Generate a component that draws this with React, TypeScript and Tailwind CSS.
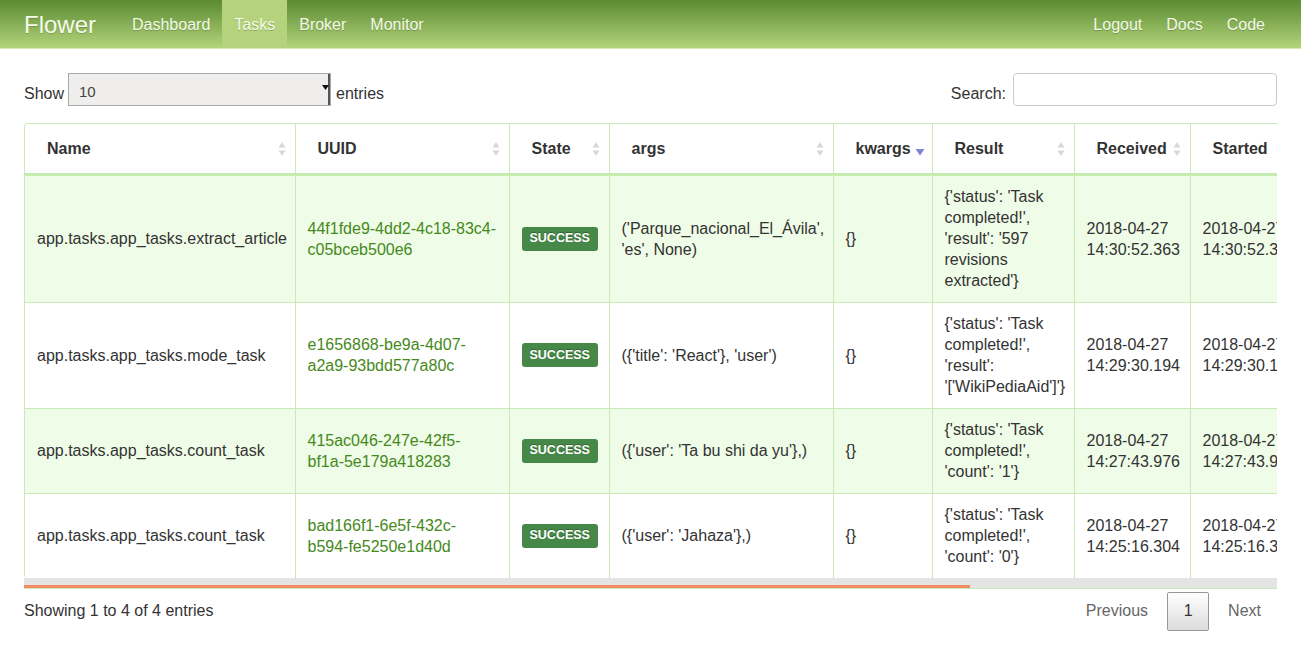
import React from 'react';

type Task = {
  name: string;
  uuid: string;
  state: string;
  args: string;
  kwargs: string;
  result: string;
  received: string;
  started: string;
};

const tasks: Task[] = [
  {
    name: 'app.tasks.app_tasks.extract_article',
    uuid: '44f1fde9-4dd2-4c18-83c4-c05bceb500e6',
    state: 'SUCCESS',
    args: "('Parque_nacional_El_Ávila', 'es', None)",
    kwargs: '{}',
    result: "{'status': 'Task completed!', 'result': '597 revisions extracted'}",
    received: '2018-04-27 14:30:52.363',
    started: '2018-04-27 14:30:52.364',
  },
  {
    name: 'app.tasks.app_tasks.mode_task',
    uuid: 'e1656868-be9a-4d07-a2a9-93bdd577a80c',
    state: 'SUCCESS',
    args: "({'title': 'React'}, 'user')",
    kwargs: '{}',
    result: "{'status': 'Task completed!', 'result': '['WikiPediaAid']'}",
    received: '2018-04-27 14:29:30.194',
    started: '2018-04-27 14:29:30.195',
  },
  {
    name: 'app.tasks.app_tasks.count_task',
    uuid: '415ac046-247e-42f5-bf1a-5e179a418283',
    state: 'SUCCESS',
    args: "({'user': 'Ta bu shi da yu'},)",
    kwargs: '{}',
    result: "{'status': 'Task completed!', 'count': '1'}",
    received: '2018-04-27 14:27:43.976',
    started: '2018-04-27 14:27:43.977',
  },
  {
    name: 'app.tasks.app_tasks.count_task',
    uuid: 'bad166f1-6e5f-432c-b594-fe5250e1d40d',
    state: 'SUCCESS',
    args: "({'user': 'Jahaza'},)",
    kwargs: '{}',
    result: "{'status': 'Task completed!', 'count': '0'}",
    received: '2018-04-27 14:25:16.304',
    started: '2018-04-27 14:25:16.305',
  },
];

const columns: { label: string; width: number; sort: 'both' | 'desc' }[] = [
  { label: 'Name', width: 270, sort: 'both' },
  { label: 'UUID', width: 214, sort: 'both' },
  { label: 'State', width: 100, sort: 'both' },
  { label: 'args', width: 224, sort: 'both' },
  { label: 'kwargs', width: 99, sort: 'desc' },
  { label: 'Result', width: 142, sort: 'both' },
  { label: 'Received', width: 116, sort: 'both' },
  { label: 'Started', width: 116, sort: 'both' },
  { label: 'Succeeded', width: 116, sort: 'both' },
  { label: 'Retries', width: 90, sort: 'both' },
  { label: 'Runtime', width: 100, sort: 'both' },
];

const SortBoth = () => (
  <svg width="8" height="16" viewBox="0 0 8 16" className="shrink-0">
    <path d="M4 1 L7.5 6.5 H0.5 Z" fill="#d8d8d8" />
    <path d="M4 15 L7.5 9.5 H0.5 Z" fill="#d8d8d8" />
  </svg>
);

const SortDesc = () => (
  <svg width="10" height="8" viewBox="0 0 10 8" className="shrink-0 mt-[6px]">
    <path d="M0.5 1 H9.5 L5 7.5 Z" fill="#7f86d4" />
  </svg>
);

const navLink = 'px-3 h-full flex items-center pt-[1px] text-[16px] text-[#f4f9ea] [text-shadow:0_1px_0_rgba(60,90,30,0.35)]';

export default function App() {
  return (
    <div className="min-h-screen bg-white font-['Liberation_Sans',Arial,sans-serif] text-[#333] text-[16px]">
      <nav className="h-[49px] flex items-center justify-between bg-gradient-to-b from-[#5b8b30] to-[#b3d47b] border-b border-[#d5e8b8] px-6">
        <div className="flex items-center h-full">
          <span className="text-[24px] text-[#f6faec] mr-6 pt-[1px] [text-shadow:0_1px_0_rgba(60,90,30,0.3)]">Flower</span>
          <a className={navLink}>Dashboard</a>
          <a className={navLink + ' bg-[#b5d37c]'}>Tasks</a>
          <a className={navLink}>Broker</a>
          <a className={navLink}>Monitor</a>
        </div>
        <div className="flex items-center h-full">
          <a className={navLink}>Logout</a>
          <a className={navLink}>Docs</a>
          <a className={navLink}>Code</a>
        </div>
      </nav>

      <div className="px-6 pt-6">
        <div className="flex items-start justify-between h-[33px]">
          <div className="flex items-start">
            <span className="mr-[4px] mt-[9px]">Show</span>
            <div className="w-[263px] h-[33px] bg-[#efeeec] border border-[#a9a9a9] flex items-start justify-between pl-[10px]">
              <span className="text-[15px] text-[#444] mt-[7px]">10</span>
              <div className="h-full w-[5px] flex flex-col items-center border-r-2 border-[#555]">
                <svg width="7" height="6" viewBox="0 0 7 6" className="mt-[11px] -ml-[2px]">
                  <path d="M0 0 H7 L3.5 5 Z" fill="#111" />
                </svg>
              </div>
            </div>
            <span className="ml-[5px] mt-[9px]">entries</span>
          </div>
          <div className="flex items-start">
            <span className="mr-[7px] mt-[9px]">Search:</span>
            <div className="w-[264px] h-[33px] border border-[#ccc] rounded-[4px] bg-white" />
          </div>
        </div>

        <div className="mt-[17px] w-[1253px]">
          <div className="overflow-hidden border-l border-t border-[#c9eab6] rounded-tl-[4px] rounded-bl-[4px]">
            <table className="table-fixed border-collapse w-[1587px]">
              <colgroup>
                {columns.map((c) => (
                  <col key={c.label} style={{ width: c.width }} />
                ))}
              </colgroup>
              <thead>
                <tr className="h-[50px]">
                  {columns.map((c) => (
                    <th
                      key={c.label}
                      className="bg-white border-r border-[#c9eab6] border-b-[3px] border-b-[#c6ebb0] pl-[22px] pr-[9px] pt-[1px] text-left font-bold text-[16px] text-[#333] whitespace-nowrap"
                    >
                      {c.sort === 'both' ? (
                        <div className="flex items-center justify-between">
                          <span>{c.label}</span>
                          <SortBoth />
                        </div>
                      ) : (
                        <div className="flex items-center gap-[4px]">
                          <span>{c.label}</span>
                          <SortDesc />
                        </div>
                      )}
                    </th>
                  ))}
                </tr>
              </thead>
              <tbody>
                {tasks.map((t, i) => {
                  const last = i === tasks.length - 1;
                  const td =
                    'align-middle border-r border-[#c9eab6] pl-3 pr-2 py-[10.5px] leading-[21px] ' +
                    (last ? '' : 'border-b');
                  return (
                    <tr key={t.uuid} className={i % 2 === 0 ? 'bg-[#effce7]' : 'bg-white'}>
                      <td className={td}>{t.name}</td>
                      <td className={td + ' !pr-[12px] text-[#45891b]'}>{t.uuid}</td>
                      <td className={td}>
                        <span className="inline-flex items-center h-[24px] px-[8px] rounded-[3px] bg-[#468847] text-white text-[12.5px] font-bold [text-shadow:0_-1px_0_rgba(0,0,0,0.25)]">
                          {t.state}
                        </span>
                      </td>
                      <td className={td}>{t.args}</td>
                      <td className={td}>{t.kwargs}</td>
                      <td className={td}>{t.result}</td>
                      <td className={td}>{t.received}</td>
                      <td className={td}>{t.started}</td>
                      <td className={td}>{t.received}</td>
                      <td className={td}>0</td>
                      <td className={td}>0.21</td>
                    </tr>
                  );
                })}
              </tbody>
            </table>
          </div>
          <div className="h-[10px] bg-[#e4e4e4] flex flex-col justify-end">
            <div className="h-[3px] w-[946px] bg-[#f28b61]" />
          </div>
          <div className="h-px bg-[#c9eab6]" />
        </div>

        <div className="flex items-center justify-between w-[1253px] mt-[3px] h-[39px]">
          <span className="text-[#333]">Showing 1 to 4 of 4 entries</span>
          <div className="flex items-center">
            <span className="text-[#666] mr-[19px]">Previous</span>
            <span className="w-[42px] h-[39px] flex items-center justify-center border border-[#979797] rounded-[2px] bg-gradient-to-b from-white to-[#dcdcdc] text-[#333]">
              1
            </span>
            <span className="text-[#666] ml-[19px] mr-[16px]">Next</span>
          </div>
        </div>
      </div>
    </div>
  );
}
